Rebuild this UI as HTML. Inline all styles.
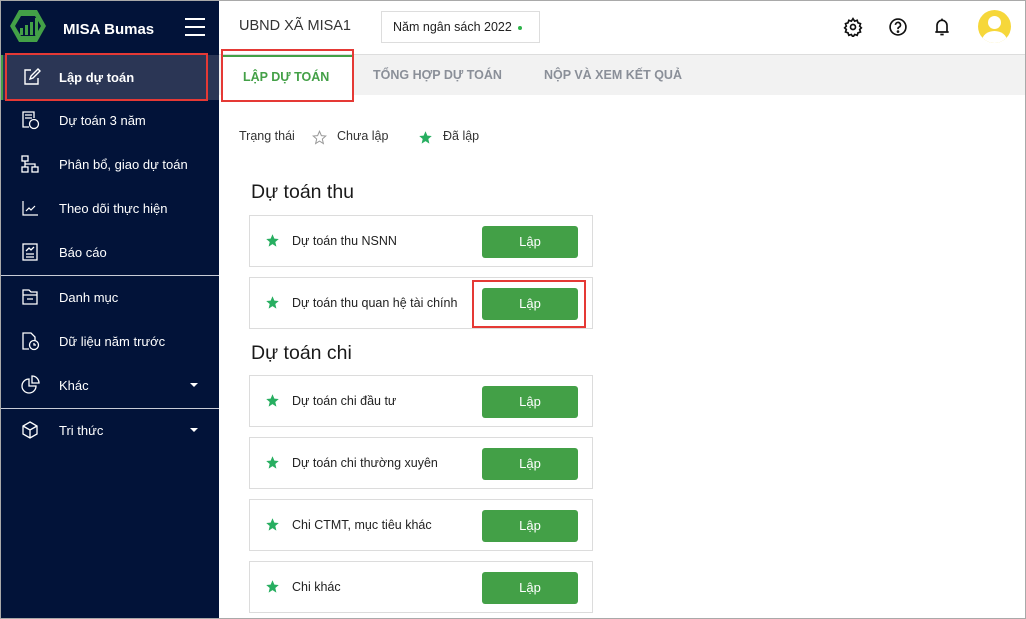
<!DOCTYPE html>
<html><head><meta charset="utf-8"><style>
*{box-sizing:border-box;margin:0;padding:0}
body{width:1026px;height:619px;overflow:hidden;font-family:"Liberation Sans",Arial,sans-serif;background:#fff;position:relative}
.frame{position:absolute;inset:0;border:1px solid #a9a9a9;pointer-events:none;z-index:10}
.sb{position:absolute;left:0;top:0;width:219px;height:619px;background:#021339;color:#fff}
.item{position:absolute;left:0;width:219px;height:44px;font-size:13px;display:flex;align-items:center}
.item .ic{position:absolute;left:20px;top:12px;width:20px;height:20px}
.item span{position:absolute;left:59px}
.div{position:absolute;left:0;width:219px;height:1px;background:#c8ccd6}
.caret{position:absolute;left:190px;width:0;height:0;border-left:4px solid transparent;border-right:4px solid transparent;border-top:4px solid #fff}
.red{position:absolute;border:2px solid #e53935}
.top{position:absolute;left:219px;top:0;right:0;height:55px;border-bottom:1px solid #ddd}
.tabs{position:absolute;left:219px;top:55px;right:0;height:40px;background:#f2f2f2}
.tab{position:absolute;top:13px;font-size:12.5px;color:#8a8f98;font-weight:bold}
.card{position:absolute;left:249px;width:344px;height:52px;border:1px solid #dcdcdc;background:#fff}
.card .t{position:absolute;left:42px;top:18px;font-size:12.5px;color:#222}
.card .st{position:absolute;left:15px;top:17px}
.btn{position:absolute;left:232px;top:10px;width:96px;height:32px;background:#43a047;border-radius:3px;color:#fff;font-size:13px;text-align:center;line-height:32px}
h2{position:absolute;left:251px;font-size:19.5px;font-weight:normal;color:#1a1a1a}
</style></head><body>
<div class="sb">
 <svg style="position:absolute;left:9px;top:9px" width="38" height="34" viewBox="0 0 38 34"><path d="M10 1h18l9 16-9 16H10L1 17z" fill="#43a047"/><path d="M12 7h14l6 10-6 10H12L6 17z" fill="#021339"/><rect x="11" y="19" width="3" height="7" fill="#43a047"/><rect x="16" y="16" width="3" height="10" fill="#43a047"/><rect x="21" y="13" width="3" height="13" fill="#43a047"/><rect x="26" y="9" width="3" height="17" fill="#43a047"/></svg>
 <div style="position:absolute;left:63px;top:21px;font-size:15px;font-weight:bold">MISA Bumas</div>
 <div style="position:absolute;left:185px;top:18px;width:20px;height:2px;background:#fff;box-shadow:0 8px 0 #fff,0 16px 0 #fff"></div>
 <div class="item" style="top:55px;height:45px;background:#2b3655;border-left:3px solid #43a047"><svg class="ic" style="left:19px" viewBox="0 0 20 20" fill="none" stroke="#fff" stroke-width="1.4"><path d="M9 3H3v14h13v-6"/><path d="M8 12l1-3 7-7 2 2-7 7z"/></svg><span style="left:56px;font-weight:bold">Lập dự toán</span></div>
 <div class="item" style="top:98px"><svg class="ic" viewBox="0 0 20 20" fill="none" stroke="#fff" stroke-width="1.3"><path d="M14 8V2H3v15h6"/><path d="M5 5h7M5 8h7"/><circle cx="14" cy="14" r="4.5"/></svg><span>Dự toán 3 năm</span></div>
 <div class="item" style="top:142px"><svg class="ic" viewBox="0 0 20 20" fill="none" stroke="#fff" stroke-width="1.3"><rect x="2" y="2" width="6" height="5"/><rect x="2" y="13" width="6" height="5"/><rect x="12" y="13" width="6" height="5"/><path d="M5 7v6M5 10h10v3"/></svg><span>Phân bổ, giao dự toán</span></div>
 <div class="item" style="top:186px"><svg class="ic" viewBox="0 0 20 20" fill="none" stroke="#fff" stroke-width="1.2"><path d="M3 3v14h15"/><path d="M6 13l3-3 2 2 4-4"/></svg><span>Theo dõi thực hiện</span></div>
 <div class="item" style="top:230px"><svg class="ic" viewBox="0 0 20 20" fill="none" stroke="#fff" stroke-width="1.3"><rect x="3" y="2" width="14" height="16"/><path d="M6 9l3-3 2 2 3-3M6 12h8M6 15h8"/></svg><span>Báo cáo</span></div>
 <div class="div" style="top:275px"></div>
 <div class="item" style="top:275px"><svg class="ic" viewBox="0 0 20 20" fill="none" stroke="#fff" stroke-width="1.3"><path d="M3 3h6l2 2h6v12H3z"/><path d="M3 8h14M7 12h6"/></svg><span>Danh mục</span></div>
 <div class="item" style="top:319px"><svg class="ic" viewBox="0 0 20 20" fill="none" stroke="#fff" stroke-width="1.3"><path d="M9 18H3V2h8l4 4v4"/><circle cx="14" cy="14" r="4.5"/><path d="M14 12v2h2"/></svg><span>Dữ liệu năm trước</span></div>
 <div class="item" style="top:363px"><svg class="ic" viewBox="0 0 20 20" fill="none" stroke="#fff" stroke-width="1.3"><path d="M9 4a7 7 0 1 0 7 7H9z"/><path d="M12 1v7h7a7 7 0 0 0-7-7z"/></svg><span>Khác</span><div class="caret" style="top:20px"></div></div>
 <div class="div" style="top:408px"></div>
 <div class="item" style="top:408px"><svg class="ic" viewBox="0 0 20 20" fill="none" stroke="#fff" stroke-width="1.3"><path d="M10 2l7 4v8l-7 4-7-4V6z"/><path d="M3 6l7 4 7-4M10 10v8"/></svg><span>Tri thức</span><div class="caret" style="top:20px"></div></div>
</div>
<div class="red" style="left:5px;top:53px;width:203px;height:48px"></div>
<div class="top">
 <div style="position:absolute;left:20px;top:18px;font-size:14.5px;color:#333">UBND XÃ MISA1</div>
 <div style="position:absolute;left:162px;top:11px;width:159px;height:32px;border:1px solid #ddd;font-size:12.5px;color:#222;line-height:30px;padding-left:11px">Năm ngân sách 2022 <span style="display:inline-block;width:4px;height:4px;border-radius:50%;background:#2db34a;vertical-align:middle;margin-left:3px"></span></div>
 <svg style="position:absolute;left:624px;top:17px" width="20" height="20" viewBox="0 0 24 24" fill="none" stroke="#111" stroke-width="2"><circle cx="12" cy="12" r="3"/><path d="M12 2l2 3 3-1 1 3 3 1-1 3 2 2-2 2 1 3-3 1-1 3-3-1-2 3-2-3-3 1-1-3-3-1 1-3-2-2 2-2-1-3 3-1 1-3 3 1z"/></svg>
 <svg style="position:absolute;left:669px;top:17px" width="20" height="20" viewBox="0 0 24 24" fill="none" stroke="#111" stroke-width="2"><circle cx="12" cy="12" r="9.5"/><path d="M9 9.5a3 3 0 1 1 4 2.8c-1 .4-1 1.2-1 2.2"/><circle cx="12" cy="17.5" r=".6" fill="#111"/></svg>
 <svg style="position:absolute;left:713px;top:16px" width="20" height="22" viewBox="0 0 24 24" fill="none" stroke="#111" stroke-width="2"><path d="M6 18V10a6 6 0 0 1 12 0v8H6zM4 18h16M10 21h4M12 2v2"/></svg>
 <div style="position:absolute;left:759px;top:10px;width:33px;height:33px;border-radius:50%;background:#f6d73a;overflow:hidden"><div style="position:absolute;left:10px;top:6px;width:13px;height:13px;border-radius:50%;background:#fff"></div><div style="position:absolute;left:4px;top:21px;width:25px;height:20px;border-radius:50%;background:#fff"></div></div>
</div>
<div class="tabs">
 <div style="position:absolute;left:3px;top:0;width:130px;height:40px;background:#fff;border-top:2px solid #43a047"></div>
 <div class="tab" style="left:24px;color:#43a047;top:15px">LẬP DỰ TOÁN</div>
 <div class="tab" style="left:154px">TỔNG HỢP DỰ TOÁN</div>
 <div class="tab" style="left:325px">NỘP VÀ XEM KẾT QUẢ</div>
</div>
<div class="red" style="left:221px;top:49px;width:133px;height:53px"></div>
<div style="position:absolute;left:239px;top:129px;font-size:12.5px;color:#333">Trạng thái</div>
<svg style="position:absolute;left:312px;top:130px" width="15" height="15" viewBox="0 0 24 24"><path d="M12 2l3 7 7 .6-5.5 4.8 1.7 7.3L12 17.8 5.8 21.7l1.7-7.3L2 9.6 9 9z" fill="none" stroke="#999" stroke-width="1.6"/></svg>
<div style="position:absolute;left:337px;top:129px;font-size:12.5px;color:#333">Chưa lập</div>
<svg style="position:absolute;left:418px;top:130px" width="15" height="15" viewBox="0 0 24 24"><path d="M12 2l3 7 7 .6-5.5 4.8 1.7 7.3L12 17.8 5.8 21.7l1.7-7.3L2 9.6 9 9z" fill="#27ae60"/></svg>
<div style="position:absolute;left:443px;top:129px;font-size:12.5px;color:#333">Đã lập</div>
<h2 style="top:181px">Dự toán thu</h2>
<h2 style="top:342px">Dự toán chi</h2>
<div class="card" style="top:215px"><svg class="st" width="15" height="15" viewBox="0 0 24 24"><path d="M12 2l3 7 7 .6-5.5 4.8 1.7 7.3L12 17.8 5.8 21.7l1.7-7.3L2 9.6 9 9z" fill="#27ae60"/></svg><div class="t">Dự toán thu NSNN</div><div class="btn">Lập</div></div>
<div class="card" style="top:277px"><svg class="st" width="15" height="15" viewBox="0 0 24 24"><path d="M12 2l3 7 7 .6-5.5 4.8 1.7 7.3L12 17.8 5.8 21.7l1.7-7.3L2 9.6 9 9z" fill="#27ae60"/></svg><div class="t">Dự toán thu quan hệ tài chính</div><div class="btn">Lập</div></div>
<div class="card" style="top:375px"><svg class="st" width="15" height="15" viewBox="0 0 24 24"><path d="M12 2l3 7 7 .6-5.5 4.8 1.7 7.3L12 17.8 5.8 21.7l1.7-7.3L2 9.6 9 9z" fill="#27ae60"/></svg><div class="t">Dự toán chi đầu tư</div><div class="btn">Lập</div></div>
<div class="card" style="top:437px"><svg class="st" width="15" height="15" viewBox="0 0 24 24"><path d="M12 2l3 7 7 .6-5.5 4.8 1.7 7.3L12 17.8 5.8 21.7l1.7-7.3L2 9.6 9 9z" fill="#27ae60"/></svg><div class="t">Dự toán chi thường xuyên</div><div class="btn">Lập</div></div>
<div class="card" style="top:499px"><svg class="st" width="15" height="15" viewBox="0 0 24 24"><path d="M12 2l3 7 7 .6-5.5 4.8 1.7 7.3L12 17.8 5.8 21.7l1.7-7.3L2 9.6 9 9z" fill="#27ae60"/></svg><div class="t">Chi CTMT, mục tiêu khác</div><div class="btn">Lập</div></div>
<div class="card" style="top:561px"><svg class="st" width="15" height="15" viewBox="0 0 24 24"><path d="M12 2l3 7 7 .6-5.5 4.8 1.7 7.3L12 17.8 5.8 21.7l1.7-7.3L2 9.6 9 9z" fill="#27ae60"/></svg><div class="t">Chi khác</div><div class="btn">Lập</div></div>
<div class="red" style="left:472px;top:280px;width:114px;height:48px"></div>
<div class="frame"></div>
</body></html>
